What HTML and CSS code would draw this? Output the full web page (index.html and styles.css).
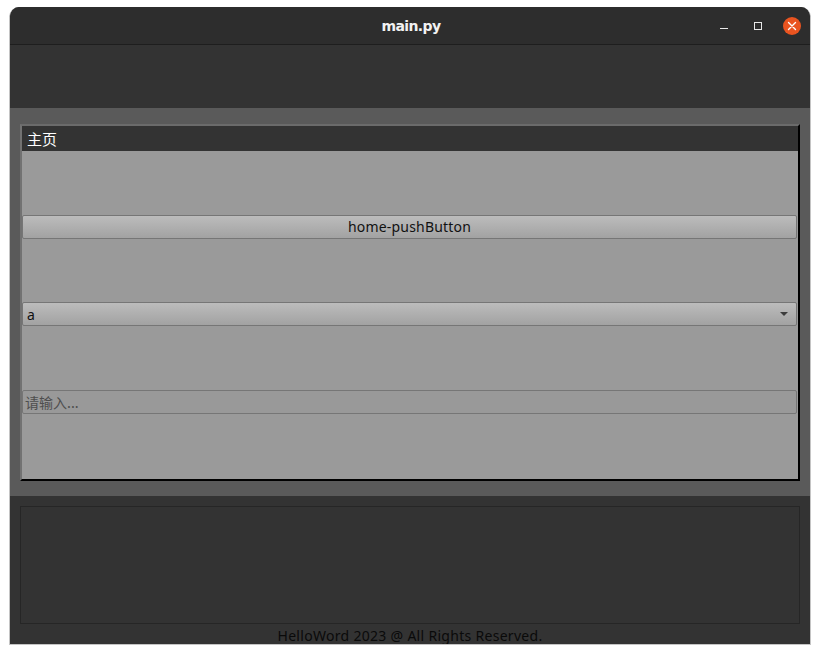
FILE: index.html
```html
<!DOCTYPE html>
<html>
<head>
<meta charset="utf-8">
<link rel="stylesheet" href="styles.css">
</head>
<body>
<div class="window">
  <div class="titlebar">
    <span class="title">main.py</span>
    <div class="controls">
      <span class="ctl min"></span>
      <span class="ctl max"></span>
      <span class="ctl close">
        <svg width="18" height="18" viewBox="0 0 18 18"><circle cx="9" cy="9" r="9" fill="#e95420"/><path d="M5.5 5.5 L12.5 12.5 M12.5 5.5 L5.5 12.5" stroke="#fff" stroke-width="1.4" stroke-linecap="round"/></svg>
      </span>
    </div>
  </div>
  <div class="toolbar"></div>
  <div class="main">
    <div class="frame">
      <div class="frame-head">主页</div>
      <div class="frame-body">
        <div class="btn">home-pushButton</div>
        <div class="combo"><span>a</span><span class="arrow"></span></div>
        <div class="edit">请输入...</div>
      </div>
    </div>
  </div>
  <div class="bottom">
    <div class="box"></div>
    <div class="footer">HelloWord 2023 @ All Rights Reserved.</div>
  </div>
</div>
</body>
</html>
```
FILE: styles.css
```css
* { box-sizing: border-box; }
html, body { margin: 0; padding: 0; background: #ffffff; }
body { padding: 7px 0 0 9px; font-family: "Noto Sans", "Noto Sans CJK SC", sans-serif; }
.window {
  width: 802px;
  height: 638px;
  border: 1px solid #c4c4c4;
  border-top: none;
  border-radius: 10px 10px 0 0;
  background: #333333;
  display: flex;
  flex-direction: column;
  overflow: hidden;
}
.titlebar {
  height: 38px;
  background: #2d2d2d;
  border-bottom: 1px solid #1e1e1e;
  display: flex;
  align-items: center;
  justify-content: center;
  position: relative;
  flex: none;
}
.title {
  color: #f2f2f2;
  font-weight: bold;
  font-size: 14px;
  font-family: "DejaVu Sans", sans-serif;
  letter-spacing: -0.6px;
  margin-left: 2px;
}
.controls {
  position: absolute;
  right: 9px;
  top: 10px;
  display: flex;
  align-items: center;
}
.ctl { display: block; }
.min { width: 8px; height: 1px; background: #e8e8e8; margin-top: 5px; margin-right: 26px; }
.max { width: 8px; height: 8px; border: 1px solid #e8e8e8; margin-right: 21px; }
.close { width: 18px; height: 18px; }
.close svg { display: block; }
.toolbar { height: 63px; background: #333333; flex: none; }
.main {
  background: #5a5a5a;
  padding: 16px 10px 15px 10px;
  flex: none;
}
.frame {
  height: 357px;
  border-top: 2px solid #6b6b6b;
  border-left: 2px solid #727272;
  border-right: 2px solid #000000;
  border-bottom: 2px solid #000000;
  display: flex;
  flex-direction: column;
}
.frame-head {
  height: 25px;
  background: #333333;
  color: #ffffff;
  font-size: 15px;
  font-weight: normal;
  font-family: "Noto Sans CJK SC", sans-serif;
  padding: 2px 0 0 5px;
  line-height: 22px;
  flex: none;
}
.frame-body {
  flex: 1;
  background: #9a9a9a;
  display: flex;
  flex-direction: column;
  justify-content: space-evenly;
  padding: 0 1px 2px 0;
}
.btn, .combo, .edit {
  height: 24px;
  border: 1px solid #767676;
  border-radius: 2px;
  font-size: 14px;
  color: #111;
}
.btn {
  background: linear-gradient(#bcbcbc, #a2a2a2);
  display: flex;
  align-items: center;
  justify-content: center;
  letter-spacing: 0.2px;
}
.combo {
  background: linear-gradient(#bcbcbc, #a2a2a2);
  display: flex;
  align-items: center;
  justify-content: space-between;
  padding: 0 8px 0 4px;
}
.arrow {
  width: 0; height: 0;
  border-left: 4px solid transparent;
  border-right: 4px solid transparent;
  border-top: 4px solid #3c3c3c;
}
.edit {
  background: #999999;
  color: #4e4e4e;
  display: flex;
  align-items: center;
  padding-left: 2px;
  font-family: "Noto Sans CJK SC", sans-serif;
}
.bottom {
  flex: 1;
  background: #333333;
  padding: 10px 10px 0 10px;
  display: flex;
  flex-direction: column;
}
.box {
  height: 118px;
  border: 1px solid #262626;
}
.footer {
  text-align: center;
  color: #0a0a0a;
  font-size: 14px;
  line-height: 20px;
  letter-spacing: 0.3px;
  margin-top: 2px;
}
```
